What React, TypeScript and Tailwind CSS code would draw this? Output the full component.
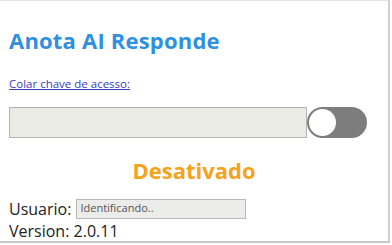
import React from 'react';

export default function App() {
  return (
    <div className="w-[392px] h-[245px] bg-white overflow-hidden" style={{ fontFamily: '"Open Sans", "Noto Sans", sans-serif' }}>
      {/* popup frame */}
      <div className="w-[390px] h-[243px] border-t border-t-[#e4e4e4] border-r-2 border-r-[#d0d0d0] border-b-2 border-b-[#c8c8c8] flex flex-col px-[9px]">
        {/* Title */}
        <h1 className="mt-[24px] text-[22px] font-bold leading-[30px] text-[#2f8fe0] tracking-[0.2px]">
          Anota AI Responde
        </h1>

        {/* Access key link */}
        <a href="#" className="mt-[22px] text-[11.5px] leading-[14px] text-[#3b3bc4] underline w-fit">
          Colar chave de acesso:
        </a>

        {/* Key input + switch */}
        <div className="mt-[16px] flex items-center">
          <div className="w-[298px] h-[31px] bg-[#ebebe6] border border-[#b4b4b0]" />
          <div className="w-[60px] h-[31px] rounded-full bg-[#7d7d7d] flex items-center pl-[2px]">
            <div className="w-[27px] h-[27px] rounded-full bg-white" />
          </div>
        </div>

        {/* Status */}
        <div className="mt-[17px] text-center text-[22px] font-bold leading-[30px] text-[#f5a21c]">
          Desativado
        </div>

        {/* User */}
        <div className="mt-[13px] flex items-center h-[21px]">
          <span className="text-[16px] text-[#222] leading-[20px]">Usuario:</span>
          <div className="ml-[5px] w-[170px] h-[20px] bg-[#ececea] border border-[#b8b8b4] flex items-center px-[3px] text-[11px] text-[#555]">
            Identificando..
          </div>
        </div>

        {/* Version */}
        <div className="text-[16px] text-[#222] leading-[20px] mt-[2px]">Version: 2.0.11</div>
      </div>
    </div>
  );
}
